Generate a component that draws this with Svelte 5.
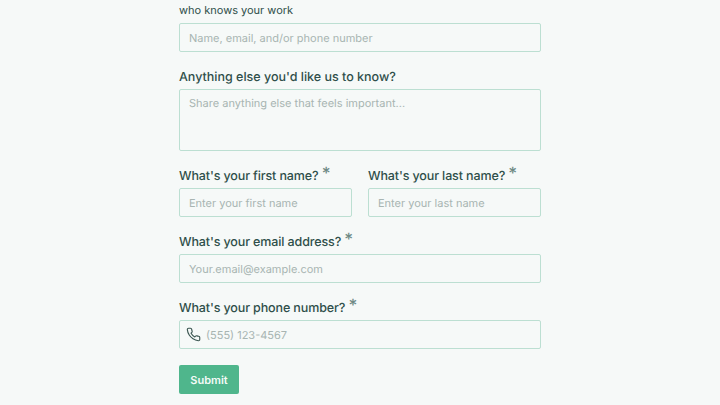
<script>
  let first = $state('');
  let last = $state('');
  let email = $state('');
  let phone = $state('');
  let reference = $state('');
  let notes = $state('');
</script>

<form class="form" onsubmit={(e) => e.preventDefault()}>
  <div class="field top">
    <label class="wrapped" for="reference">who knows your work</label>
    <input id="reference" type="text" placeholder="Name, email, and/or phone number" bind:value={reference} />
  </div>

  <div class="field">
    <label for="notes">Anything else you'd like us to know?</label>
    <textarea id="notes" placeholder="Share anything else that feels important..." bind:value={notes}></textarea>
  </div>

  <div class="row">
    <div class="field">
      <label class="need" for="first">What's your first name? <span class="req">*</span></label>
      <input id="first" type="text" placeholder="Enter your first name" bind:value={first} />
    </div>
    <div class="field">
      <label class="need" for="last">What's your last name? <span class="req">*</span></label>
      <input id="last" type="text" placeholder="Enter your last name" bind:value={last} />
    </div>
  </div>

  <div class="field">
    <label class="need" for="email">What's your email address? <span class="req">*</span></label>
    <input id="email" type="email" placeholder="Your.email@example.com" bind:value={email} />
  </div>

  <div class="field">
    <label class="need" for="phone">What's your phone number? <span class="req">*</span></label>
    <div class="phone">
      <svg viewBox="0 0 24 24" width="15" height="15" fill="none" stroke="currentColor" stroke-width="1.8" stroke-linecap="round" stroke-linejoin="round" aria-hidden="true">
        <path d="M22 16.92v3a2 2 0 0 1-2.18 2 19.79 19.79 0 0 1-8.63-3.07 19.5 19.5 0 0 1-6-6 19.79 19.79 0 0 1-3.07-8.67A2 2 0 0 1 4.11 2h3a2 2 0 0 1 2 1.72 12.84 12.84 0 0 0 .7 2.81 2 2 0 0 1-.45 2.11L8.09 9.91a16 16 0 0 0 6 6l1.27-1.27a2 2 0 0 1 2.11-.45 12.84 12.84 0 0 0 2.81.7A2 2 0 0 1 22 16.92z" />
      </svg>
      <input id="phone" type="tel" placeholder="(555) 123-4567" bind:value={phone} />
    </div>
  </div>

  <button type="submit">Submit</button>
</form>

<style>
  :global(body) {
    margin: 0;
    background: #f6f9f8;
    overflow: hidden;
  }
  .form {
    width: 362px;
    height: 405px;
    box-sizing: border-box;
    margin: 0 auto;
    padding-top: 2px;
    display: flex;
    flex-direction: column;
    gap: 16px;
    font-family: Inter, "Liberation Sans", sans-serif;
    color: #2f4f4a;
    text-rendering: geometricPrecision;
  }
  .field {
    display: flex;
    flex-direction: column;
    gap: 3px;
    min-width: 0;
    flex: none;
  }
  .field.top {
    gap: 5px;
  }
  label {
    font-size: 12.5px;
    font-weight: 500;
    line-height: 17px;
    padding-top: 1px;
    white-space: nowrap;
  }
  .need {
    letter-spacing: -0.12px;
  }
  .wrapped {
    font-size: 11px;
    font-weight: 400;
    line-height: 16px;
    padding-top: 0;
  }
  .req {
    font-size: 17px;
    line-height: 10px;
    color: #6f8a85;
    position: relative;
    top: -1px;
  }
  input,
  textarea {
    box-sizing: border-box;
    width: 100%;
    height: 29px;
    padding: 0 9px;
    font: inherit;
    font-size: 11px;
    color: #2f4f4a;
    background: #f6f9f8;
    border: 1px solid #bcdfd2;
    border-radius: 2px;
    outline: none;
    display: block;
    text-rendering: geometricPrecision;
  }
  textarea {
    height: 62px;
    padding: 6px 9px;
    resize: none;
  }
  ::placeholder {
    color: #a8b5b2;
    opacity: 1;
  }
  .row {
    display: grid;
    grid-template-columns: 173px 173px;
    gap: 16px;
    flex: none;
  }
  .phone {
    display: flex;
    align-items: center;
    gap: 5px;
    height: 29px;
    box-sizing: border-box;
    padding-left: 6px;
    background: #f6f9f8;
    border: 1px solid #bcdfd2;
    border-radius: 2px;
    color: #3a5550;
  }
  .phone input {
    border: 0;
    height: 100%;
    padding: 0;
    background: transparent;
    flex: 1;
    min-width: 0;
  }
  button {
    align-self: flex-start;
    flex: none;
    width: 60px;
    height: 29px;
    background: #4fb68c;
    color: #f4fbf8;
    border: 0;
    border-radius: 2px;
    font: inherit;
    font-size: 11px;
    font-weight: 600;
    text-rendering: geometricPrecision;
  }
</style>
